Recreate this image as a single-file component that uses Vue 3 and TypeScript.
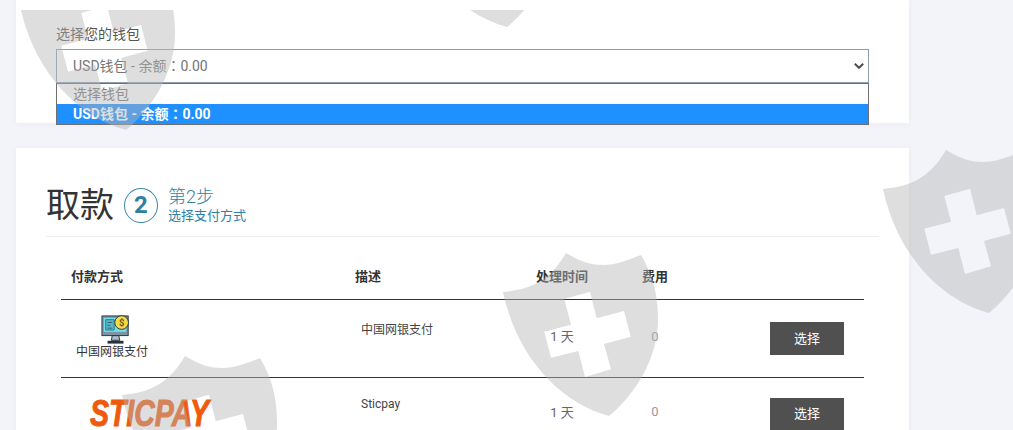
<script setup lang="ts">
const shields = [
  { x: 20, y: -33 },
  { x: 401, y: -136 },
  { x: 503, y: 253 },
  { x: 883, y: 150 },
  { x: 122, y: 356 },
].map((s) => ({ left: s.x + 'px', top: s.y - 10 + 'px' }))
const shieldPath =
  'M63 0C78 9 88 12 100 12C113 12 125 7 138 2C150 22 155 42 155 67C155 105 132 142 106 163C58 150 14 105 0 39C32 36 48 25 63 0Z' +
  'M87 38.7L93.7 65.3L121 58L127.7 83.7L101 91L108 116.3L82 124L75.3 98L48 104.7L41.3 78.7L68 71.7L61.3 46Z'
</script>

<template>
  <div class="page">
    <section class="card wallet">
      <label class="field-label" for="wallet">选择您的钱包</label>
      <div class="select-wrap">
        <select id="wallet" class="wallet-select">
          <option>USD钱包 - 余额：0.00</option>
        </select>
        <svg class="chevron" viewBox="0 0 10 6" width="10" height="6" aria-hidden="true">
          <path d="M0.8 0.8L5 4.8L9.2 0.8" fill="none" stroke="#4d4d4d" stroke-width="2" />
        </svg>
        <ul class="options">
          <li class="option">选择钱包</li>
          <li class="option active">USD钱包 - 余额：0.00</li>
        </ul>
      </div>
    </section>

    <section class="card methods">
      <header class="head">
        <h1 class="title">取款</h1>
        <span class="step-circle">2</span>
        <div class="step-text">
          <div class="step-no">第2步</div>
          <div class="step-desc">选择支付方式</div>
        </div>
      </header>

      <table class="table">
        <colgroup>
          <col class="c1" />
          <col class="c2" />
          <col class="c3" />
          <col class="c4" />
          <col />
        </colgroup>
        <thead>
          <tr>
            <th>付款方式</th>
            <th>描述</th>
            <th class="center">处理时间</th>
            <th class="center">费用</th>
            <th></th>
          </tr>
        </thead>
        <tbody>
          <tr class="row-one">
            <td class="method-cell">
              <svg class="bank-icon" viewBox="0 0 32 32" width="30" height="30" aria-hidden="true">
                <rect x="1" y="1" width="28" height="21" fill="#7d93a6" stroke="#26323a" stroke-width="1" />
                <rect x="3" y="3" width="24" height="15" fill="#6fe0ea" />
                <path d="M5 5h9v11H5z" fill="#58b8c8" stroke="#3b6f82" stroke-width="1" />
                <path d="M7 8h5M7 11h3M7 14h5" stroke="#2f5c6e" stroke-width="1" />
                <path d="M12 22h7l1 5h-9z" fill="#a9bccb" stroke="#26323a" stroke-width="1" />
                <rect x="7" y="27.5" width="17" height="3" fill="#26323a" />
                <circle cx="22" cy="8" r="7.3" fill="#f7d944" stroke="#26323a" stroke-width="1" />
                <text x="22" y="11.5" class="coin">$</text>
              </svg>
              <div class="method-name">中国网银支付</div>
            </td>
            <td class="desc">中国网银支付</td>
            <td class="center time">1 天</td>
            <td class="center fee">0</td>
            <td class="action"><button class="choose" type="button">选择</button></td>
          </tr>
          <tr class="row-two">
            <td class="method-cell">
              <span class="sticpay">STICPAY</span>
            </td>
            <td class="desc">Sticpay</td>
            <td class="center time">1 天</td>
            <td class="center fee">0</td>
            <td class="action"><button class="choose" type="button">选择</button></td>
          </tr>
        </tbody>
      </table>
    </section>

    <div class="watermark" aria-hidden="true">
      <svg
        v-for="(s, i) in shields"
        :key="i"
        class="shield"
        :style="s"
        viewBox="0 0 155 164"
        width="155"
        height="164"
      >
        <path :d="shieldPath" fill-rule="evenodd" />
      </svg>
    </div>
  </div>
</template>

<style>
html,
body {
  margin: 0;
  background: #f2f4f9;
  overflow: hidden;
}
</style>

<style scoped>
.page {
  height: 430px;
  overflow: hidden;
  padding: 0 104px 0 16px;
  box-sizing: border-box;
  font-family: Roboto, "Noto Sans CJK SC", sans-serif;
  color: #333;
}
.card {
  background: #fff;
  box-shadow: 0 1px 6px rgba(60, 70, 100, 0.05);
}
.wallet {
  height: 123px;
  padding: 26px 40px 0;
  box-sizing: border-box;
}
.field-label {
  display: block;
  font-size: 14px;
  line-height: 17px;
  color: #555;
  margin-bottom: 6px;
}
.select-wrap {
  position: relative;
}
.wallet-select {
  display: block;
  width: 100%;
  height: 34px;
  padding: 0 16px;
  appearance: none;
  border: 1px solid #8f9db3;
  border-radius: 0;
  background: #fff;
  color: #757575;
  font: 14px Roboto, "Noto Sans CJK TC", sans-serif;
  outline: none;
}
.chevron {
  position: absolute;
  top: 14px;
  right: 5px;
}
.options {
  position: absolute;
  top: 34px;
  left: 0;
  right: 0;
  z-index: 2;
  margin: 0;
  padding: 0;
  list-style: none;
  background: #fff;
  border: 1px solid #6f6f6f;
  font-family: Roboto, "Noto Sans CJK TC", sans-serif;
}
.option {
  height: 20px;
  padding-left: 16px;
  font-size: 14px;
  line-height: 20px;
  color: #757575;
}
.option.active {
  background: #1e90ff;
  color: #fff;
  font-weight: 700;
}
.methods {
  margin-top: 25px;
  padding: 30px 30px 0;
  height: 400px;
  box-sizing: border-box;
}
.head {
  display: flex;
  align-items: flex-start;
  height: 58px;
  border-bottom: 1px solid #eee;
}
.title {
  margin: 0 10px 0 0;
  font-size: 34px;
  line-height: 54px;
  font-weight: 400;
  color: #333;
}
.step-circle {
  width: 34px;
  height: 35px;
  margin: 10px 10px 0 0;
  box-sizing: border-box;
  border: 1px solid #3a86a8;
  border-radius: 50%;
  text-align: center;
  font-size: 24px;
  font-weight: 700;
  line-height: 33px;
  color: #2e7fa3;
}
.step-text {
  margin-top: 8px;
  color: #2e7fa3;
}
.step-no {
  font-size: 18px;
  line-height: 22px;
  font-weight: 300;
}
.step-desc {
  font-size: 13px;
  line-height: 15px;
}
.table {
  width: 803px;
  margin: 15px 0 0 15px;
  border-collapse: collapse;
  table-layout: fixed;
}
.c1 {
  width: 284px;
}
.c2 {
  width: 181px;
}
.c3 {
  width: 72px;
}
.c4 {
  width: 114px;
}
th {
  height: 47px;
  padding: 0 0 0 10px;
  border-bottom: 1px solid #333;
  text-align: left;
  font-size: 13px;
  font-weight: 700;
  color: #333;
}
th.center,
td.center {
  padding: 0;
  text-align: center;
}
td {
  box-sizing: border-box;
  padding: 0;
  font-size: 12px;
}
.row-one td {
  height: 78px;
  border-bottom: 1px solid #333;
}
.row-two td {
  height: 73px;
}
.method-cell {
  vertical-align: top;
}
.row-one .method-cell {
  padding-top: 15px;
  padding-right: 182px;
  text-align: center;
}
.bank-icon {
  display: block;
  margin-left: 40px;
}
.coin {
  font-family: Roboto, sans-serif;
  font-size: 10px;
  font-weight: 700;
  fill: #6b5a10;
  text-anchor: middle;
}
.method-name {
  font-size: 12px;
  line-height: 14px;
  color: #333;
  white-space: nowrap;
}
.row-two .method-cell {
  padding: 21px 0 0 29px;
}
.sticpay {
  display: inline-block;
  font-family: "Liberation Sans", sans-serif;
  font-size: 36px;
  line-height: 30px;
  font-weight: 700;
  font-style: italic;
  color: #ee5a0e;
  -webkit-text-stroke: 1px #ee5a0e;
  transform: scaleX(0.79);
  transform-origin: left center;
}
.desc {
  vertical-align: top;
  padding-left: 16px;
  font-size: 12px;
  color: #444;
}
.row-one .desc {
  padding-top: 20px;
}
.row-two .desc {
  padding-top: 19px;
}
td.time {
  font-size: 13px;
  color: #666;
  padding-bottom: 6px;
}
td.fee {
  font-size: 13px;
  color: #999;
  padding-bottom: 5px;
}
.action {
  text-align: right;
  padding-right: 20px;
}
.choose {
  display: inline-block;
  vertical-align: middle;
  width: 74px;
  height: 33px;
  padding: 0 0 3px;
  border: 0;
  background: #505050;
  color: #fff;
  font: 13px Roboto, "Noto Sans CJK SC", sans-serif;
}
.watermark {
  position: fixed;
  top: 10px;
  left: 0;
  right: 0;
  bottom: 0;
  overflow: hidden;
  pointer-events: none;
  z-index: 10;
}
.shield {
  position: absolute;
  fill: rgba(182, 182, 182, 0.45);
}
</style>
